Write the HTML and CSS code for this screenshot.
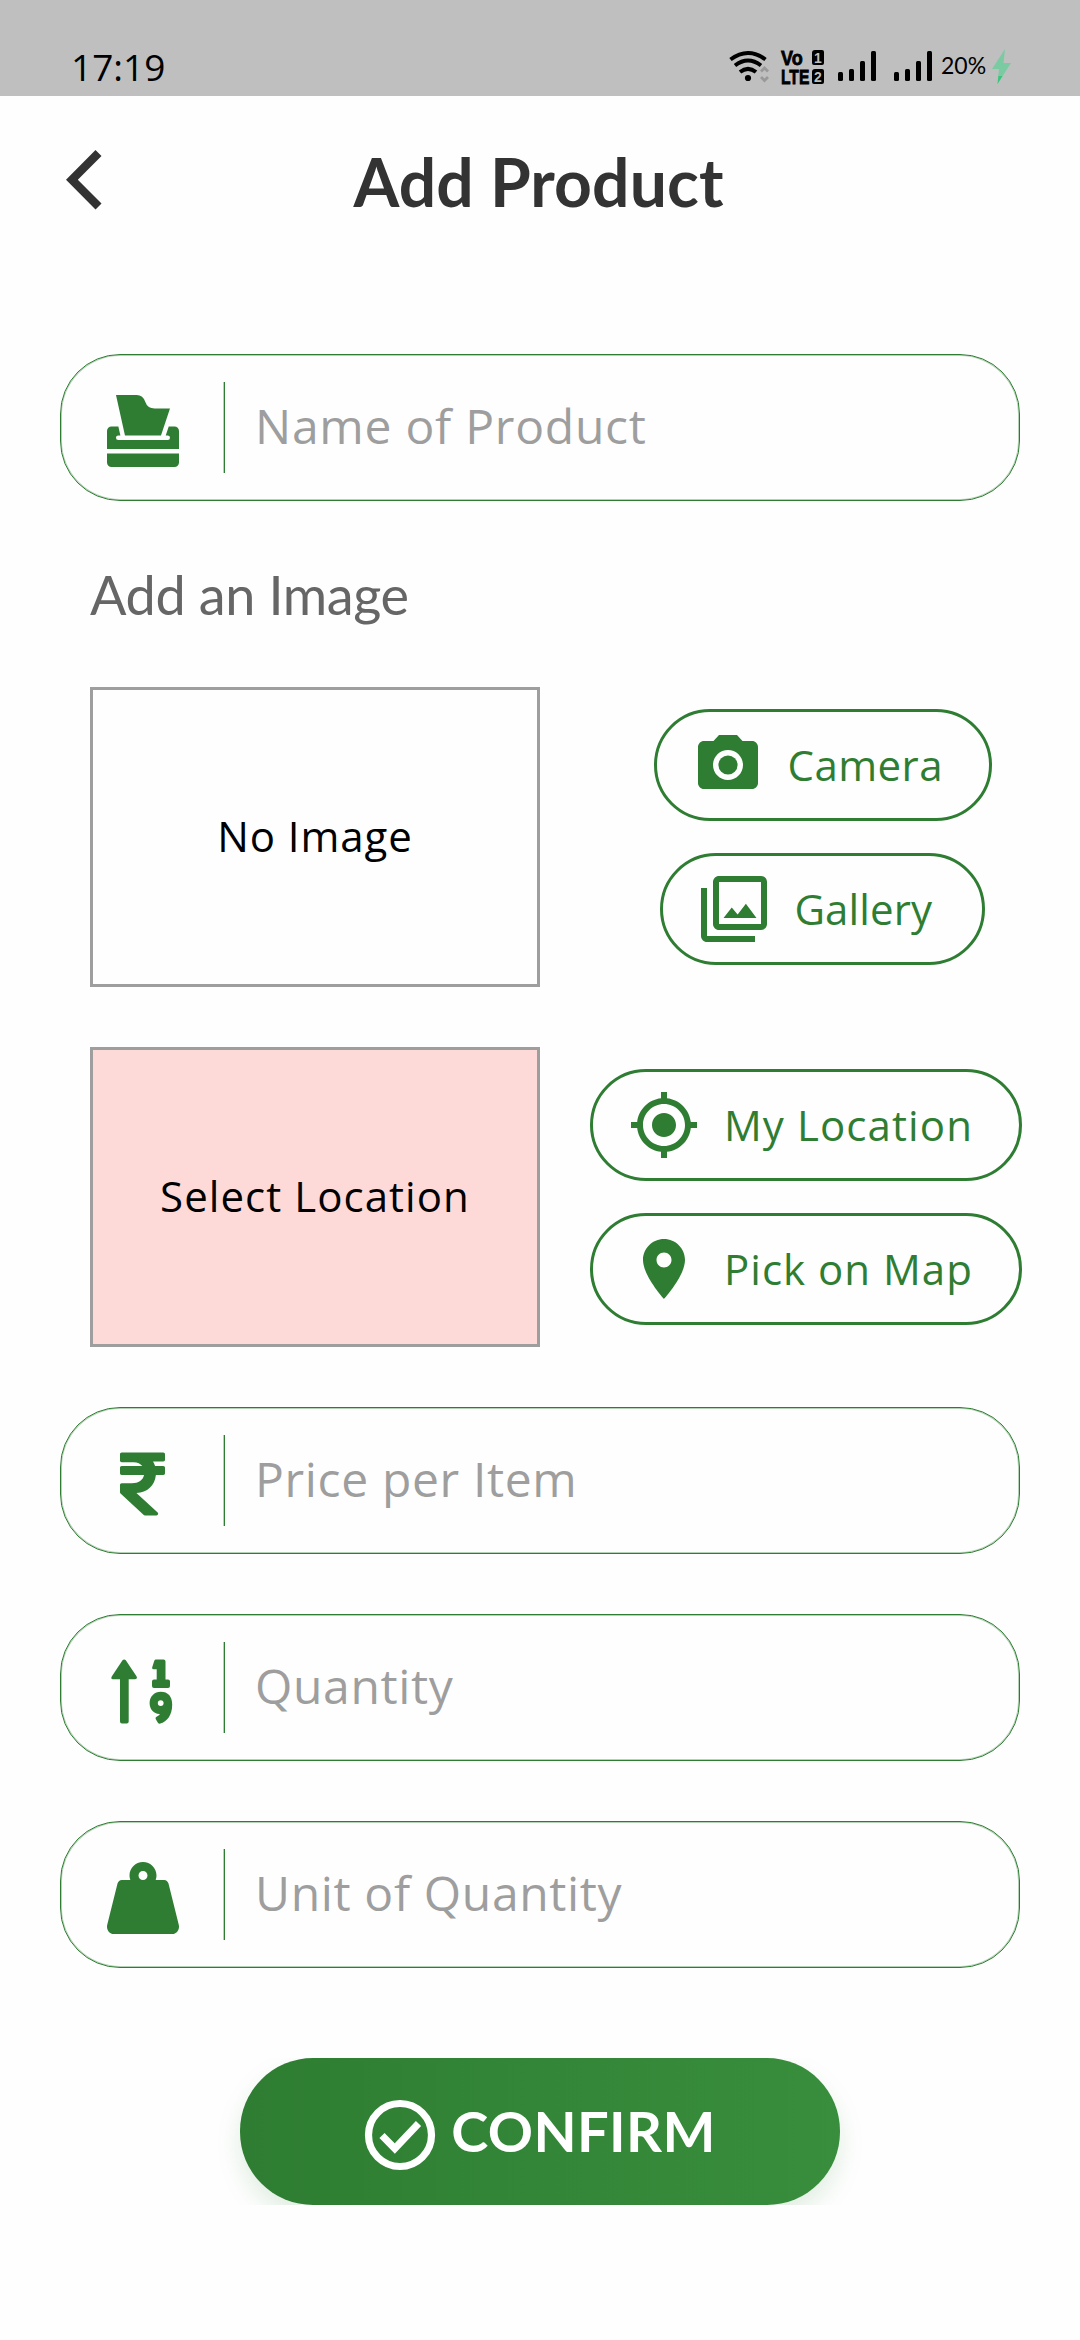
FILE: index.html
```html
<!DOCTYPE html>
<html lang="en">
<head>
<meta charset="utf-8">
<title>Add Product</title>
<link rel="stylesheet" href="styles.css">
</head>
<body>
<div class="status">
  <span class="clock">17:19</span>
  <div class="indicators">
    <svg class="wifi" width="40" height="34" viewBox="0 0 40 34" fill="none" stroke="#000" stroke-width="4">
      <path d="M1.500 9.500Q19 -3.500 36.500 9.500M6 15.500Q19 5.500 32 15.500M11 22Q19 15.800 27 22"/>
      <circle cx="19" cy="28" r="3.100" fill="#000" stroke="none"/>
      <path d="M32 21.500L35.500 18L39 21.500M32 27L35.500 30.500L39 27" stroke="#999" stroke-width="2.800"/>
    </svg>
    <div class="volte">
      <span class="vo">Vo</span><span class="sim">1</span>
      <span class="lte">LTE</span><span class="sim">2</span>
    </div>
    <svg class="bars-a" width="38" height="30" viewBox="0 0 38 30"><rect y="21" width="5" height="9" rx="1.500"/><rect x="11" y="18" width="5" height="12" rx="1.500"/><rect x="22" y="10" width="5" height="20" rx="1.500"/><rect x="33" width="5" height="30" rx="1.500"/></svg>
    <svg class="bars-b" width="38" height="30" viewBox="0 0 38 30"><rect y="21" width="5" height="9" rx="1.500"/><rect x="11" y="18" width="5" height="12" rx="1.500"/><rect x="22" y="10" width="5" height="20" rx="1.500"/><rect x="33" width="5" height="30" rx="1.500"/></svg>
    <span class="battery">20%</span>
    <svg class="bolt" width="20" height="36" viewBox="0 0 20 36"><path d="M13 0L0 20H7L5.500 35L19 14H11.500Z" fill="#7bcba2"/><path d="M6.400 27H10.500L5.500 35Z" fill="#3cc47c"/></svg>
  </div>
</div>

<header class="header">
  <svg class="back" width="36" height="60" viewBox="0 0 36 60"><path d="M29.500 0L35.500 6L11.800 29.800L35.500 53.500L29.500 59.500L0 29.800Z" fill="#333"/></svg>
  <h1 class="title">Add Product</h1>
</header>

<main class="form">
  <div class="field">
    <span class="field-icon"><svg width="72" height="72" viewBox="0 0 512 512"><path d="M383.880 287.820l64-192H338.470a70.200 70.200 0 0 1-66.590-48 70.210 70.210 0 0 0-66.600-48H63.880l64 288zM0 479.820a32 32 0 0 0 32 32h448a32 32 0 0 0 32-32v-64H0zm480-256h-41.060l-21.330 64h14.270a16 16 0 0 1 0 32h-352a16 16 0 1 1 0-32h15.210l-14.220-64H32a32 32 0 0 0-32 32v128h512v-128a32 32 0 0 0-32-32z"/></svg></span>
    <span class="hint hint-name">Name of Product</span>
  </div>

  <h2 class="subtitle">Add an Image</h2>

  <section class="picker">
    <div class="preview"><span class="no-image">No Image</span></div>
    <div class="actions">
      <div class="btn">
        <svg width="72" height="72" viewBox="0 0 24 24"><circle cx="12" cy="12" r="3.200"/><path d="M9 2L7.170 4H4c-1.100 0-2 .9-2 2v12c0 1.100.9 2 2 2h16c1.100 0 2-.9 2-2V6c0-1.100-.9-2-2-2h-3.170L15 2H9zm3 15c-2.760 0-5-2.240-5-5s2.240-5 5-5 5 2.240 5 5-2.240 5-5 5z"/></svg>
        <span class="btn-text camera">Camera</span>
      </div>
      <div class="btn btn-gallery">
        <svg width="72" height="72" viewBox="0 0 24 24"><path d="M15.960 10.290l-2.750 3.540-1.960-2.360L8.500 15h11l-3.540-4.710zM3 5H1v16c0 1.100.9 2 2 2h16v-2H3V5zm18-4H7c-1.100 0-2 .9-2 2v14c0 1.100.9 2 2 2h14c1.100 0 2-.9 2-2V3c0-1.100-.9-2-2-2zm0 16H7V3h14v14z"/></svg>
        <span class="btn-text gallery">Gallery</span>
      </div>
    </div>
  </section>

  <section class="picker picker-location">
    <div class="preview preview-error"><span class="select-location">Select Location</span></div>
    <div class="actions">
      <div class="btn">
        <svg width="72" height="72" viewBox="0 0 24 24"><path d="M12 8c-2.210 0-4 1.790-4 4s1.790 4 4 4 4-1.790 4-4-1.790-4-4-4zm8.940 3c-.46-4.170-3.770-7.480-7.940-7.940V1h-2v2.060C6.830 3.520 3.520 6.830 3.060 11H1v2h2.060c.46 4.170 3.770 7.480 7.940 7.940V23h2v-2.060c4.170-.46 7.480-3.770 7.940-7.940H23v-2h-2.060zM12 19c-3.870 0-7-3.130-7-7s3.130-7 7-7 7 3.130 7 7-3.130 7-7 7z"/></svg>
        <span class="btn-text my-location">My Location</span>
      </div>
      <div class="btn">
        <svg width="72" height="72" viewBox="0 0 24 24"><path d="M12 2C8.130 2 5 5.130 5 9c0 5.250 7 13 7 13s7-7.750 7-13c0-3.870-3.130-7-7-7zm0 9.500c-1.380 0-2.500-1.120-2.500-2.500s1.120-2.500 2.500-2.500 2.500 1.120 2.500 2.500-1.120 2.500-2.500 2.500z"/></svg>
        <span class="btn-text pick-map">Pick on Map</span>
      </div>
    </div>
  </section>

  <div class="fields">
    <div class="field">
      <span class="field-icon"><svg width="45" height="72" viewBox="0 0 320 512"><path d="M308 96c6.627 0 12-5.373 12-12V44c0-6.627-5.373-12-12-12H12C5.373 32 0 37.373 0 44v44.748c0 6.627 5.373 12 12 12h85.280c27.308 0 48.261 9.958 60.970 27.252H12c-6.627 0-12 5.373-12 12v40c0 6.627 5.373 12 12 12h158.757c-6.217 36.086-39.137 58.252-85.511 58.252H12c-6.627 0-12 5.373-12 12v53.012c0 3.349 1.400 6.546 3.861 8.818l165.052 152.356a12 12 0 0 0 8.139 3.182h82.562c10.924 0 16.166-13.408 8.139-20.818L116.871 319.906c76.499-2.340 131.144-53.395 138.318-127.906H308c6.627 0 12-5.373 12-12v-40c0-6.627-5.373-12-12-12h-58.690c-3.486-11.541-8.280-22.246-14.252-32H308z"/></svg></span>
      <span class="hint hint-price">Price per Item</span>
    </div>
    <div class="field">
      <span class="field-icon"><svg width="63" height="72" viewBox="1.500 0 63 72">
        <path d="M16.300 5.200L27 21.200Q28.400 24.200 25.500 24.200H19.200V66.500Q19.200 68.500 17.200 68.500H12.500Q10.500 68.500 10.500 66.500V24.200H3.500Q.8 24.200 2.400 21.200L13 5.200Q14.600 3.600 16.300 5.200Z"/>
        <path d="M46.500 4.500H54Q56 4.500 56 6.500V24.500H58.500Q60.500 24.500 60.500 26.500V31Q60.500 33 58.500 33H44.500Q42.500 33 42.500 31V26.500Q42.500 24.500 44.500 24.500H47.200V14.200H44.200Q42 14 42.800 12L44.800 5.800Q45.300 4.500 46.500 4.500Z"/>
        <path fill-rule="evenodd" d="M51.300 36.800C58.500 36.800 62.700 41.500 62.700 49.500C62.700 60.500 57.500 66.500 50.800 68.600Q49.300 69 48.400 67.700L46.200 64Q45.500 62.500 47 61.800Q49.500 60.300 50.500 58.900C44.500 59.300 40.100 54.300 40.100 48.300C40.100 41.500 45 36.800 51.300 36.800ZM51.200 45.200A2.900 2.900 0 1 0 51.200 51A2.900 2.900 0 1 0 51.200 45.200Z"/>
      </svg></span>
      <span class="hint hint-quantity">Quantity</span>
    </div>
    <div class="field">
      <span class="field-icon"><svg width="72" height="72" viewBox="0 0 512 512"><path d="M510.280 445.860l-73.030-292.130c-3.800-15.190-16.440-25.720-30.870-25.720h-60.250c3.570-10.050 5.880-20.720 5.880-32 0-53.020-42.980-96-96-96s-96 42.980-96 96c0 11.280 2.300 21.950 5.880 32h-60.250c-14.430 0-27.080 10.540-30.870 25.720L1.720 445.860C-6.610 479.170 16.380 512 48.030 512h415.950c31.640 0 54.630-32.830 46.300-66.140zM256 128c-17.640 0-32-14.360-32-32s14.360-32 32-32 32 14.360 32 32-14.360 32-32 32z"/></svg></span>
      <span class="hint hint-unit">Unit of Quantity</span>
    </div>
  </div>

  <div class="confirm">
    <svg width="72" height="72" viewBox="0 0 72 72" fill="none" stroke="#fff" stroke-width="7.200"><circle cx="36" cy="36" r="31.500"/><path d="M18 36.500L30.800 49.500L54.500 24.500"/></svg>
    <span class="confirm-text">CONFIRM</span>
  </div>
</main>
</body>
</html>
```
FILE: styles.css
```css
* { box-sizing: border-box; }
body {
  margin: 0;
  width: 1080px;
  height: 2340px;
  background: #fefefe;
  font-family: "Open Sans", "Noto Sans", sans-serif;
}
svg { display: block; flex: none; }

/* Status bar */
.status {
  height: 96px;
  padding: 0 68px 0 71px;
  background: #bfbfbf;
  display: flex;
  justify-content: space-between;
  color: #000;
}
.clock { margin-top: 42px; font-size: 37px; line-height: 50px; letter-spacing: 0; }
.indicators { display: flex; align-items: flex-start; }
.wifi { margin-top: 50px; }
.volte {
  margin: 50px 0 0 12px;
  width: 43px;
  display: grid;
  grid-template-columns: 31px 12px;
  grid-template-rows: 16px 15px;
  row-gap: 3px;
  font-family: "Liberation Sans", sans-serif;
  font-weight: bold;
}
.vo, .lte {
  font-size: 20px;
  line-height: 16px;
  transform-origin: left center;
  -webkit-text-stroke: .8px #000;
}
.vo { transform: scaleX(.9); }
.lte { transform: scaleX(.78); }
.sim {
  height: 15px;
  background: #000;
  border-radius: 3px 2px 2px 2px;
  color: #bfbfbf;
  font-size: 14px;
  line-height: 16px;
  text-align: center;
}
.bars-a { margin: 51px 0 0 14px; }
.bars-b { margin: 51px 0 0 18px; }
.battery { width: 50px; margin: 48px 0 0 9px; font-family: Lato, sans-serif; font-size: 23px; line-height: 34px; }
.bolt { margin: 49px 0 0 1px; }

/* Header */
.header {
  position: relative;
  height: 170px;
  display: flex;
  justify-content: center;
}
.back { position: absolute; left: 66px; top: 54px; }
.title { margin: 46px 3px 0 0; font: bold 66px/80px Lato, sans-serif; letter-spacing: .1px; color: #333; }

/* Form */
.form { padding: 88px 60px 0; display: flex; flex-direction: column; }
.field {
  height: 147px;
  border: 1px solid #2e7d32;
  box-shadow: inset 0 0 0 1px rgba(46, 125, 50, .35);
  border-radius: 60px;
  display: flex;
  align-items: center;
}
.field-icon {
  width: 164px;
  height: 91px;
  display: flex;
  align-items: center;
  justify-content: center;
  border-right: 1px solid #2e7d32;
  box-shadow: inset -1px 0 rgba(46, 125, 50, .35);
}
.field-icon svg { margin-top: 6px; }
.field svg, .btn svg { fill: #2e7d32; }
.hint { margin: -3px 0 0 30px; font-size: 48px; line-height: 66px; color: #9e9e9e; white-space: nowrap; }
.hint-name { letter-spacing: .75px; }
.hint-price { letter-spacing: .65px; }
.hint-quantity { letter-spacing: .65px; }
.hint-unit { letter-spacing: .65px; }
.subtitle {
  margin: 61px 0 -1px 30px;
  font: 54px/66px Lato, sans-serif;
  letter-spacing: -.38px;
  color: #666;
}
.picker { display: flex; justify-content: space-between; margin: 60px 28px 0 30px; }
.picker-location { margin-right: -2px; }
.preview {
  width: 450px;
  height: 300px;
  border: 3px solid #9e9e9e;
  display: flex;
  align-items: center;
  justify-content: center;
  font-size: 42px;
  line-height: 58px;
  color: #000;
}
.preview span { margin-top: -2px; }
.preview-error { background: #fddad8; }
.no-image { letter-spacing: .92px; }
.select-location { letter-spacing: 1.050px; }
.actions { display: flex; flex-direction: column; align-items: center; gap: 32px; padding-top: 22px; }
.btn {
  height: 112px;
  padding: 0 46px 0 35px;
  border: 3px solid #2e7d32;
  border-radius: 56px;
  display: flex;
  align-items: center;
  gap: 24px;
  color: #2e7d32;
  font-size: 42px;
  line-height: 58px;
}
.btn-gallery { padding-right: 50px; }
.btn-text { margin-top: -1px; white-space: nowrap; }
.camera { letter-spacing: .45px; }
.gallery { letter-spacing: .1px; }
.my-location { letter-spacing: 1.100px; }
.pick-map { letter-spacing: 1.020px; }
.fields { margin-top: 60px; display: flex; flex-direction: column; gap: 60px; }

/* Submit */
.confirm {
  align-self: center;
  width: 600px;
  height: 147px;
  margin-top: 90px;
  border-radius: 73px;
  background: linear-gradient(90deg, #2e7d32, #388e3c);
  box-shadow: 0 12px 24px rgba(56, 142, 60, .15);
  clip-path: inset(0 -40px 0 -40px);
  display: flex;
  justify-content: center;
  align-items: center;
  gap: 15px;
  color: #fff;
}
.confirm svg { margin-top: 7px; }
.confirm-text { margin-top: -1px; font: bold 56px/76px Lato, sans-serif; letter-spacing: .4px; }
```
